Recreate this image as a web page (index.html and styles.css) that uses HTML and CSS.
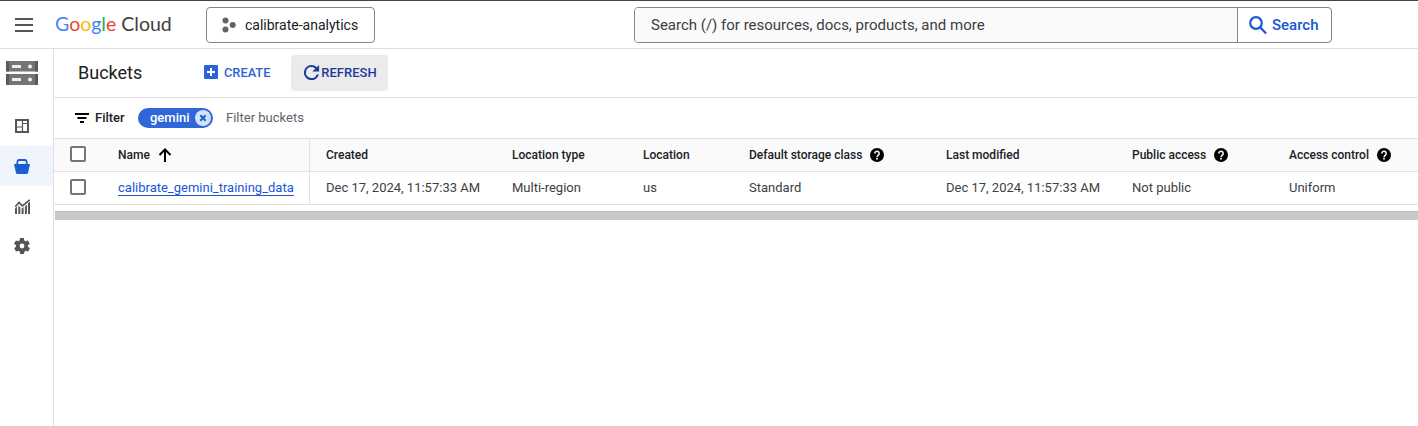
FILE: index.html
```html
<!DOCTYPE html>
<html lang="en">
<head>
<meta charset="utf-8">
<title>Buckets</title>
<link rel="stylesheet" href="styles.css">
</head>
<body>
<header class="topbar">
  <button class="menu" aria-label="Menu"><span></span><span></span><span></span></button>
  <div class="logo"><span class="lb">G</span><span class="lr">o</span><span class="ly">o</span><span class="lb">g</span><span class="lg">l</span><span class="lr">e</span> <span class="cloud">Cloud</span></div>
  <button class="project">
    <svg width="16" height="16" viewBox="0 0 16 16"><circle cx="4.500" cy="3.500" r="3" fill="#5f6368"/><circle cx="11.700" cy="8" r="3" fill="#5f6368"/><circle cx="4.500" cy="12.500" r="3" fill="#5f6368"/></svg>
    <span>calibrate-analytics</span>
  </button>
  <div class="search">
    <div class="search-input">Search (/) for resources, docs, products, and more</div>
    <button class="search-btn">
      <svg width="20" height="20" viewBox="0 0 20 20"><circle cx="8" cy="8" r="5.800" fill="none" stroke="#1a56d6" stroke-width="2.200"/><path d="M12 12l6 6.500" stroke="#1a56d6" stroke-width="2.200"/></svg>
      <span>Search</span>
    </button>
  </div>
</header>
<div class="body">
  <nav class="sidenav">
    <div class="storage-logo">
      <svg width="32" height="24" viewBox="0 0 32 24"><path d="M0 0h32v10.500H0zM0 13h32v11H0z" fill="#757575"/><path d="M0 0h3v10.500H0zM29 0h3v10.500h-3zM0 13h3v11H0zM29 13h3v11h-3z" fill="#5a5a5a"/><rect x="6" y="4" width="9" height="3" fill="#f0f0f0"/><rect x="6" y="17" width="9" height="3" fill="#f0f0f0"/><circle cx="24" cy="5.500" r="2" fill="#f0f0f0"/><circle cx="24" cy="18.500" r="2" fill="#f0f0f0"/></svg>
    </div>
    <div class="nav-item">
      <svg width="14" height="14" viewBox="0 0 14 14"><path fill="none" stroke="#555" stroke-width="2" d="M1 1h12v12H1z"/><path fill="none" stroke="#555" stroke-width="1.200" d="M7.500 1v12M1.500 8h6M7.500 4.500h5.500"/></svg>
    </div>
    <div class="nav-item active">
      <svg width="16" height="15" viewBox="0 0 16 15"><path fill="#1a5fd0" d="M0 5h16l-2 9a1.300 1.300 0 0 1-1.300 1H3.300A1.300 1.300 0 0 1 2 14z"/><path fill="none" stroke="#1a5fd0" stroke-width="1.800" d="M3 6l.6-3.800c.1-.7.600-1.200 1.300-1.200h6.200c.7 0 1.200.5 1.300 1.200L13 6"/></svg>
    </div>
    <div class="nav-item">
      <svg width="15" height="15" viewBox="0 0 15 15"><path fill="#555" d="M0 15V9.500l2-2V15zM3.300 15V6.500l2 2V15zM6.600 15V9.800l2-1.800V15zM9.900 15V7.500l2-2V15zM13 15V4.400L15 2.500V15z"/><path fill="none" stroke="#555" stroke-width="1.700" d="M.2 7.700l3.800-4.200 3.400 3.400L14.800.8"/></svg>
    </div>
    <div class="nav-item">
      <svg width="16" height="16" viewBox="2 2 20 20"><path fill="#555" d="M19.400 13c.1-.3.100-.7.100-1s0-.7-.1-1l2.100-1.600c.2-.2.200-.4.100-.6l-2-3.500c-.1-.2-.4-.3-.6-.2l-2.500 1c-.5-.4-1.100-.7-1.700-1l-.4-2.600c0-.3-.2-.5-.5-.5h-4c-.3 0-.5.200-.5.500l-.4 2.600c-.6.300-1.200.6-1.700 1l-2.500-1c-.2-.1-.5 0-.6.200l-2 3.500c-.1.200-.1.400.1.600L4.600 11c-.1.300-.1.700-.1 1s0 .7.100 1l-2.100 1.600c-.2.200-.2.400-.1.600l2 3.500c.1.200.4.300.6.200l2.500-1c.5.400 1.100.7 1.700 1l.4 2.600c0 .3.200.5.500.5h4c.3 0 .5-.2.500-.5l.4-2.600c.6-.3 1.200-.6 1.700-1l2.500 1c.2.100.5 0 .6-.2l2-3.500c.1-.2.100-.4-.1-.6zM12 15a3 3 0 1 1 0-6 3 3 0 0 1 0 6z"/></svg>
    </div>
  </nav>
  <main class="main">
    <div class="toolbar">
      <h1>Buckets</h1>
      <button class="create">
        <svg width="14" height="14" viewBox="0 0 14 14"><rect width="14" height="14" rx="1" fill="#2b63d6"/><path d="M7 3v8M3 7h8" stroke="#fff" stroke-width="2"/></svg>
        <span>CREATE</span>
      </button>
      <button class="refresh">
        <svg width="19" height="19" viewBox="2 2 20 20"><path fill="#1b3a9e" d="M17.650 6.350A7.960 7.960 0 0 0 12 4a8 8 0 1 0 7.750 10h-2.300A5.800 5.800 0 1 1 12 6.200c1.600 0 3 .65 4.100 1.700L13 11h7V4z"/></svg>
        <span>REFRESH</span>
      </button>
    </div>
    <div class="filterbar">
      <div class="filter-label">
        <svg width="14" height="10" viewBox="0 0 14 10"><path d="M0 0h14v2H0zM2.500 4h9v2h-9zM5 8h4v2H5z" fill="#000"/></svg>
        <span>Filter</span>
      </div>
      <div class="chip">
        <span>gemini</span>
        <svg width="16" height="16" viewBox="0 0 16 16"><circle cx="8" cy="8" r="8" fill="#d2e3fc"/><path d="M5.300 5.300l5.400 5.400M10.700 5.300l-5.400 5.400" stroke="#1a5fd0" stroke-width="2"/></svg>
      </div>
      <div class="filter-hint">Filter buckets</div>
    </div>
    <div class="table-wrap">
      <div class="row head">
        <div class="c-check"><span class="checkbox"></span></div>
        <div class="c-name">Name <svg class="sort" width="14" height="14" viewBox="0 0 14 14"><path d="M7 14V2M1.500 7L7 1.500 12.500 7" fill="none" stroke="#000" stroke-width="2"/></svg></div>
        <div class="c-created">Created</div>
        <div class="c-ltype">Location type</div>
        <div class="c-loc">Location</div>
        <div class="c-class">Default storage class <svg class="help" width="14" height="14" viewBox="0 0 14 14"><use href="#help"/></svg></div>
        <div class="c-mod">Last modified</div>
        <div class="c-pub">Public access <svg class="help" width="14" height="14" viewBox="0 0 14 14"><use href="#help"/></svg></div>
        <div class="c-ac">Access control <svg class="help" width="14" height="14" viewBox="0 0 14 14"><use href="#help"/></svg></div>
      </div>
      <div class="row body-row">
        <div class="c-check"><span class="checkbox"></span></div>
        <div class="c-name"><a href="#">calibrate_gemini_training_data</a></div>
        <div class="c-created">Dec 17, 2024, 11:57:33 AM</div>
        <div class="c-ltype">Multi-region</div>
        <div class="c-loc">us</div>
        <div class="c-class">Standard</div>
        <div class="c-mod">Dec 17, 2024, 11:57:33 AM</div>
        <div class="c-pub">Not public</div>
        <div class="c-ac">Uniform</div>
      </div>
    </div>
    <div class="scrollbar"></div>
  </main>
</div>
<svg width="0" height="0" class="defs"><defs><g id="help"><circle cx="7" cy="7" r="7" fill="#000"/><path d="M4.800 5.400a2.200 2.200 0 1 1 3.500 1.800c-.8.600-1.300.9-1.300 2" fill="none" stroke="#fff" stroke-width="1.500"/><rect x="6.200" y="10" width="1.600" height="1.600" fill="#fff"/></g></defs></svg>
</body>
</html>
```
FILE: styles.css
```css
* { box-sizing: border-box; }
html, body { margin: 0; height: 100%; overflow: hidden; }
body { font-family: Roboto, "Liberation Sans", sans-serif; color: #202124; background: #fff; display: flex; flex-direction: column; }
button { font: inherit; background: none; border: 0; padding: 0; cursor: pointer; }
.defs { position: absolute; }

.topbar { height: 49px; flex: none; display: flex; align-items: center; border-top: 1px solid #444; border-bottom: 1px solid #e0e0e0; }
.menu { width: 18px; margin-left: 15px; display: flex; flex-direction: column; gap: 4px; }
.menu span { display: block; height: 2px; background: #555; }
.logo { margin: 0 0 2px 22px; width: 151px; font-family: Lato, sans-serif; font-size: 19.500px; white-space: nowrap; }
.lb { color: #4285f4; } .lr { color: #ea4335; } .ly { color: #fbbc04; } .lg { color: #34a853; }
.cloud { color: #3c4043; }
.project { width: 169px; height: 36px; border: 1px solid #80868b; border-radius: 4px; display: flex; align-items: center; gap: 8px; padding-left: 14px; font-size: 14px; color: #202124; }
.search { margin-left: 259px; width: 698px; height: 36px; display: flex; border: 1px solid #80868b; border-radius: 4px; }
.search-input { flex: 1; background: #fafafa; padding-left: 16px; font-size: 15px; line-height: 34px; color: #3c4043; border-right: 1px solid #80868b; border-radius: 3px 0 0 3px; }
.search-btn { width: 93px; display: flex; align-items: center; gap: 4px; padding-left: 10px; color: #1a56d6; font-size: 15px; font-weight: 500; }

.body { flex: 1; display: flex; min-height: 0; }
.sidenav { width: 54px; flex: none; border-right: 1px solid #e0e0e0; }
.storage-logo { height: 48px; display: flex; align-items: center; padding-left: 6px; }
.nav-item { height: 40px; display: flex; align-items: center; justify-content: center; padding-right: 9px; }
.storage-logo + .nav-item { margin-top: 9px; }
.nav-item.active { background: #f0f4fd; }

.main { flex: 1; min-width: 0; }
.toolbar { height: 49px; display: flex; align-items: center; padding-left: 24px; border-bottom: 1px solid #e0e0e0; }
.toolbar h1 { margin: 0 0 1px; width: 126px; font-size: 18px; font-weight: 400; color: #202124; }
.create { display: flex; align-items: center; gap: 6px; color: #2b63d6; font-size: 12.800px; font-weight: 500; width: 87px; margin-bottom: 2px; }
.refresh { width: 97px; height: 36px; background: #ebebeb; border-radius: 3px; display: flex; align-items: center; justify-content: center; color: #1b3a9e; font-size: 13px; font-weight: 500; margin-bottom: 1px; }
.filterbar { height: 41px; display: flex; align-items: center; padding-left: 21px; border-bottom: 1px solid #e0e0e0; padding-bottom: 1px; }
.filter-label { display: flex; align-items: center; gap: 6px; width: 63px; font-size: 13px; font-weight: 500; color: #202124; }
.chip { width: 75px; height: 20px; background: #2f67d8; color: #fff; border-radius: 10px; display: flex; align-items: center; justify-content: space-between; padding: 0 2px 0 12px; font-size: 13px; font-weight: 500; }
.filter-hint { margin-left: 13px; font-size: 13px; color: #5f6368; }

.row { height: 33px; display: flex; align-items: center; border-bottom: 1px solid #e0e0e0; font-size: 13px; color: #3c4043; white-space: nowrap; }
.row > div { display: flex; align-items: center; height: 100%; }
.head { background: #fafafa; font-weight: 500; color: #202124; font-size: 12px; }
.body-row > div { padding-bottom: 1px; }
.row > .c-check { width: 64px; padding-left: 16px; padding-bottom: 3px; flex: none; }
.checkbox { width: 16px; height: 16px; border: 2px solid #757575; border-radius: 2px; background: #fff; }
.c-name { width: 192px; flex: none; border-right: 1px solid #e0e0e0; gap: 8px; }
.c-name a { color: #1a56d6; text-decoration: none; border-bottom: 1px solid #1a56d6; line-height: 15px; }
.head .c-name { color: #202124; }
.row > .c-created { width: 202px; padding-left: 16px; flex: none; }
.c-ltype { width: 131px; flex: none; }
.c-loc { width: 106px; flex: none; }
.c-class { width: 197px; flex: none; gap: 8px; }
.c-mod { width: 186px; flex: none; }
.c-pub { width: 157px; flex: none; gap: 8px; }
.c-ac { flex: none; gap: 8px; }
.scrollbar { height: 9px; margin: 6px 0 0 1px; background: #c8c8c8; border-top: 1px solid #bdbdbd; }
```
